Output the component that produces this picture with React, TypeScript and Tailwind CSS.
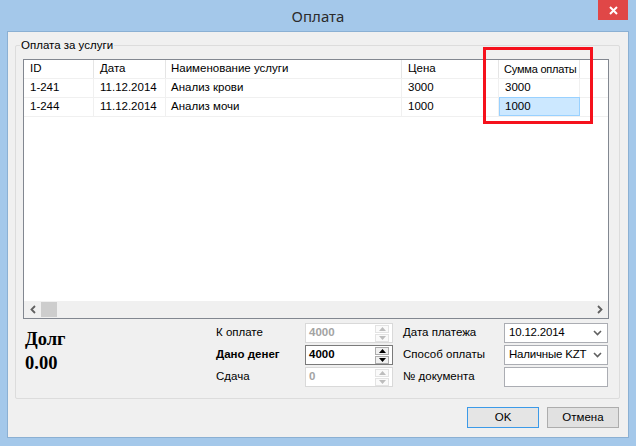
import React from 'react';

const rows = [
  { id: '1-241', date: '11.12.2014', name: 'Анализ крови', price: '3000', sum: '3000' },
  { id: '1-244', date: '11.12.2014', name: 'Анализ мочи', price: '1000', sum: '1000' },
];

const cols = 'grid grid-cols-[70px_72px_236px_97px_81px]';
const cell = 'flex items-center whitespace-nowrap overflow-hidden';

function Chevron({ dir }: { dir: 'left' | 'right' | 'down' }) {
  if (dir === 'down') {
    return (
      <svg width="9" height="6" viewBox="0 0 9 6">
        <polyline points="1,1 4.5,4.5 8,1" fill="none" stroke="#606060" strokeWidth="1.6" />
      </svg>
    );
  }
  return (
    <svg width="6" height="9" viewBox="0 0 6 9">
      <polyline
        points={dir === 'left' ? '5,1 1.5,4.5 5,8' : '1,1 4.5,4.5 1,8'}
        fill="none"
        stroke="#606060"
        strokeWidth="1.8"
      />
    </svg>
  );
}

function Spin({ active }: { active: boolean }) {
  const box = active ? 'border-[#acacac] bg-[#f0f0f0]' : 'border-[#e3e3e3] bg-[#fafafa]';
  const fill = active ? '#000' : '#bdbdbd';
  return (
    <div className="flex flex-col gap-[1px] mr-[3px]">
      <div className={`w-[14px] h-[8px] border flex items-center justify-center ${box}`}>
        <svg width="7" height="4" viewBox="0 0 7 4"><polygon points="0,4 3.5,0 7,4" fill={fill} /></svg>
      </div>
      <div className={`w-[14px] h-[8px] border flex items-center justify-center ${box}`}>
        <svg width="7" height="4" viewBox="0 0 7 4"><polygon points="0,0 3.5,4 7,0" fill={fill} /></svg>
      </div>
    </div>
  );
}

function NumField({ value, active }: { value: string; active?: boolean }) {
  return (
    <div
      className={`w-[88px] h-[20px] border bg-white flex items-center justify-between font-bold ${
        active ? 'border-[#7a7a7a] text-black' : 'border-[#d9d9d9] text-[#a3a3a3]'
      }`}
    >
      <span className="pl-[3px]">{value}</span>
      <Spin active={!!active} />
    </div>
  );
}

function Combo({ value }: { value: string }) {
  return (
    <div className="w-[104px] h-[20px] border border-[#abadb3] bg-white flex items-center justify-between">
      <span className="pl-[4px] whitespace-nowrap tracking-[-0.2px]">{value}</span>
      <span className="pr-[5px] flex items-center"><Chevron dir="down" /></span>
    </div>
  );
}

export default function App() {
  return (
    <div
      className="relative w-[636px] h-[446px] bg-[#a4c8ea] flex flex-col text-[11.5px] text-black"
      style={{ fontFamily: '"Liberation Sans", Arial, sans-serif' }}
    >
      <div className="relative h-[31px] flex items-center justify-center">
        <span className="text-[15px] text-[#2b2b2b] pt-[1px]" style={{ fontFamily: '"Noto Sans", sans-serif' }}>
          Оплата
        </span>
        <div className="absolute right-[8px] top-0 w-[30px] h-[20px] bg-[#e04747] flex items-center justify-center">
          <svg width="9" height="9" viewBox="0 0 9 9">
            <path d="M1 1 L8 8 M8 1 L1 8" stroke="#fff" strokeWidth="2" />
          </svg>
        </div>
      </div>

      <div className="mx-[7px] h-[407px] border border-[#8bb0d3] bg-[#f0f0f0] flex flex-col">
        <div className="relative ml-[7px] mt-[13px] w-[605px] h-[354px] border border-[#dcdcdc] rounded-[2px]">
          <span className="absolute left-[4px] -top-[8px] px-[1px] bg-[#f0f0f0] leading-[14px]">Оплата за услуги</span>

          <div className="ml-[7px] mt-[13px] w-[586px] h-[260px] border border-[#828790] bg-white flex flex-col">
            <div className={`${cols} h-[19px] border-b border-[#f0f0f0]`}>
              <div className={`${cell} pl-[6px] border-r border-[#e5e5e5]`}>ID</div>
              <div className={`${cell} pl-[6px] border-r border-[#e5e5e5]`}>Дата</div>
              <div className={`${cell} pl-[5px] border-r border-[#e5e5e5]`}>Наименование услуги</div>
              <div className={`${cell} pl-[6px] border-r border-[#e5e5e5]`}>Цена</div>
              <div className={`${cell} pl-[5px] border-r border-[#e5e5e5] text-[11px] tracking-[-0.2px]`}>Сумма оплаты</div>
            </div>
            {rows.map((r, i) => (
              <div key={r.id} className={`${cols} h-[19px] border-b border-[#f0f0f0]`}>
                <div className={`${cell} pl-[6px] border-r border-[#f0f0f0]`}>{r.id}</div>
                <div className={`${cell} pl-[6px] border-r border-[#f0f0f0]`}>{r.date}</div>
                <div className={`${cell} pl-[5px] border-r border-[#f0f0f0]`}>{r.name}</div>
                <div className={`${cell} pl-[6px] border-r border-[#f0f0f0]`}>{r.price}</div>
                {i === 1 ? (
                  <div className={`${cell} pl-[5px] border border-[#99d1ff] bg-[#cce8ff] -mt-[1px] h-[19px]`}>{r.sum}</div>
                ) : (
                  <div className={`${cell} pl-[6px] border-r border-[#f0f0f0]`}>{r.sum}</div>
                )}
              </div>
            ))}
            <div className="flex-1" />
            <div className="h-[17px] bg-[#f0f0f0] flex items-center">
              <div className="w-[17px] h-[17px] flex items-center justify-center"><Chevron dir="left" /></div>
              <div className="w-[16px] h-[15px] bg-[#cdcdcd]" />
              <div className="flex-1" />
              <div className="w-[17px] h-[17px] flex items-center justify-center"><Chevron dir="right" /></div>
            </div>
          </div>

          <div className="flex mt-[4px]">
            <div
              className="w-[200px] pl-[9px] pt-[4px] font-bold text-[18.5px] leading-[24px]"
              style={{ fontFamily: '"Liberation Serif", "Times New Roman", serif' }}
            >
              <div>Долг</div>
              <div>0.00</div>
            </div>
            <div className="grid grid-cols-[89px_88px_111px_104px] gap-y-[2px] items-center">
              <div>К оплате</div>
              <NumField value="4000" />
              <div className="pl-[10px]">Дата платежа</div>
              <Combo value="10.12.2014" />

              <div className="font-bold">Дано денег</div>
              <NumField value="4000" active />
              <div className="pl-[10px]">Способ оплаты</div>
              <Combo value="Наличные KZT" />

              <div>Сдача</div>
              <NumField value="0" />
              <div className="pl-[10px]">№ документа</div>
              <div className="w-[104px] h-[20px] border border-[#abadb3] bg-white" />
            </div>
          </div>
        </div>

        <div className="flex justify-end gap-[8px] mt-[8px] mr-[9px]">
          <div className="w-[72px] h-[21px] border border-[#3c9ae8] bg-[#e5e5e5] flex items-center justify-center">OK</div>
          <div className="w-[72px] h-[21px] border border-[#adadad] bg-[#e1e1e1] flex items-center justify-center">Отмена</div>
        </div>
      </div>

      <div className="absolute left-[483px] top-[47px] w-[110px] h-[77px] border-[3px] border-[#f5111c]" />
    </div>
  );
}
